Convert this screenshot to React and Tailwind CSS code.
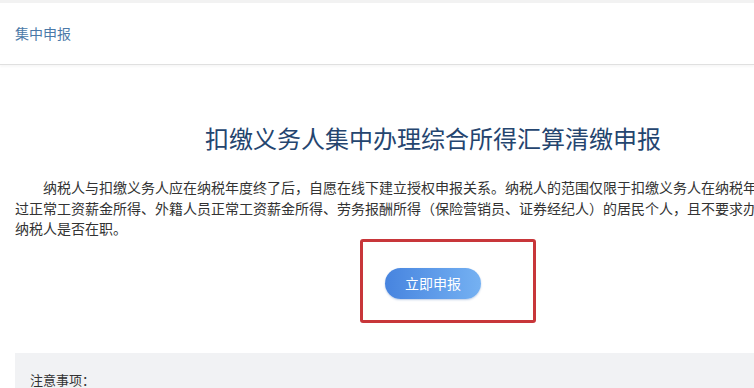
import React from 'react'

const font = { fontFamily: '"Microsoft YaHei", "Noto Sans CJK SC", "Noto Sans", sans-serif' }

const App = () => {
  return (
    <div className="w-[754px] h-[388px] overflow-hidden bg-white" style={font}>
      <div className="h-[3px] bg-[#f2f2f2]" />
      <header className="h-[62px] flex items-center px-[15px] border-b border-[#e0e0e0] shadow-[0_2px_2px_rgba(0,0,0,0.03)]">
        <span className="text-[14px] text-[#4b79a8]">集中申报</span>
      </header>

      <div className="ml-[15px] w-[836px]">
        <h1 className="mt-[57px] text-center text-[24px] leading-[32px] text-[#25456f]">
          扣缴义务人集中办理综合所得汇算清缴申报
        </h1>
        <p className="mt-[23px] text-[14px] leading-[20.5px] text-[#333] indent-[28px]">
          纳税人与扣缴义务人应在纳税年度终了后，自愿在线下建立授权申报关系。纳税人的范围仅限于扣缴义务人在纳税年度内向其支付过正常工资薪金所得、外籍人员正常工资薪金所得、劳务报酬所得（保险营销员、证券经纪人）的居民个人，且不要求办理年度汇算时纳税人是否在职。
        </p>

        <div className="relative flex justify-center pt-[29px] pb-[54px]">
          <button className="w-[96px] h-[31px] rounded-full bg-gradient-to-r from-[#4784df] to-[#75b1f2] text-white text-[14px] shadow-[0_1px_2px_rgba(40,90,170,0.3)]">
            立即申报
          </button>
          <div className="absolute left-[345px] top-0 w-[176px] h-[84px] border-[3px] border-[#c8363a] rounded-[3px]" />
        </div>

        <div className="bg-[#f1f2f4] pt-[18px] pl-[15px] h-[60px]">
          <div className="text-[13px] leading-[18px] text-[#333]">注意事项：</div>
        </div>
      </div>
    </div>
  )
}

export default App
